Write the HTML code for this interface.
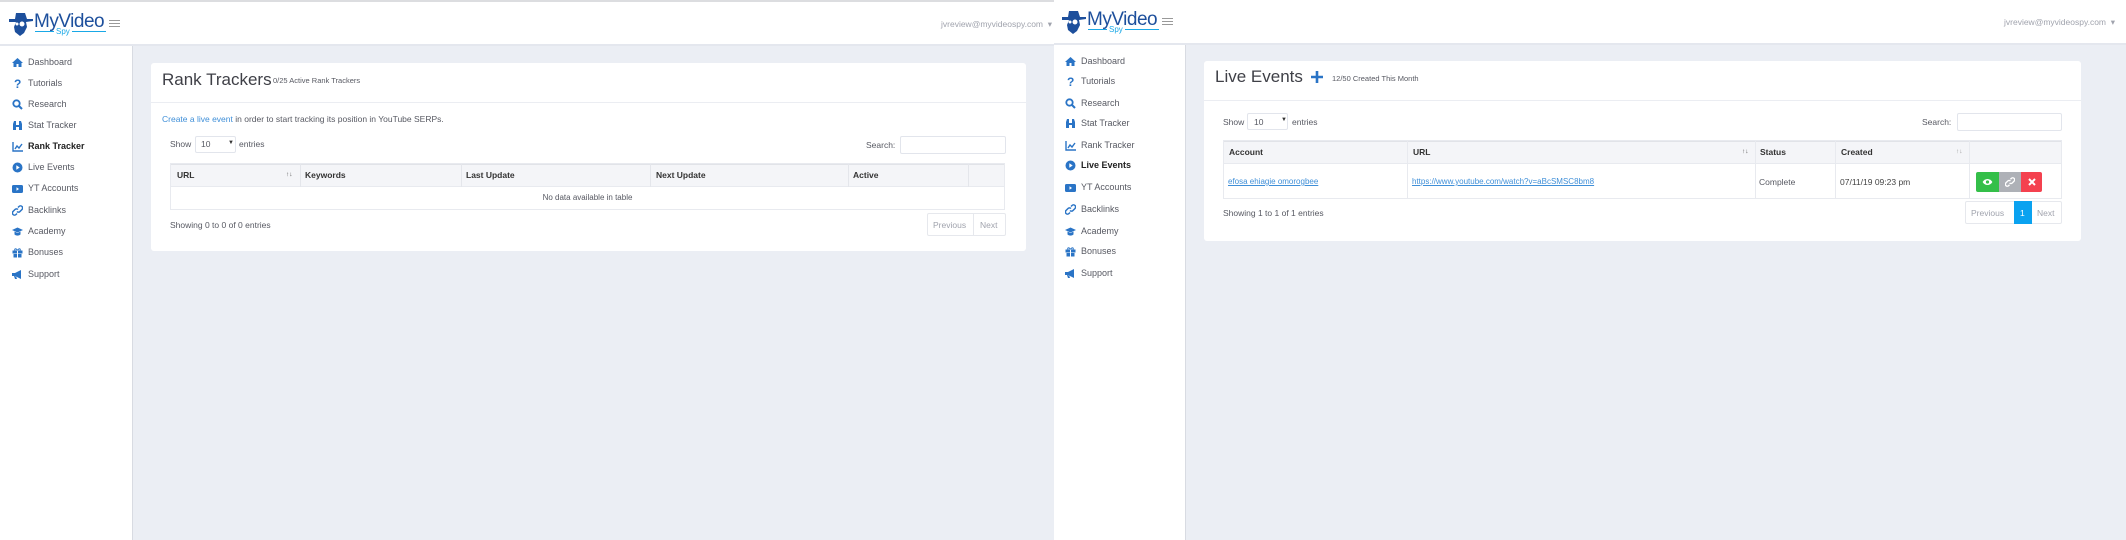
<!DOCTYPE html>
<html><head><meta charset="utf-8"><style>
*{margin:0;padding:0;box-sizing:border-box}
body{width:2126px;height:540px;overflow:hidden;font-family:"Liberation Sans",Arial,sans-serif;background:#ebeef4;position:relative;color:#575962}
.a{position:absolute}
.hdr{background:#fff;border-bottom:2px solid #e4e7ee}
.side{background:#fff;border-right:1px solid #d8dbe2}
.nav{position:absolute;font-size:9px;line-height:1;color:#575962;white-space:nowrap}
.nav svg{position:absolute;left:-16px;top:-1px}
.card{background:#fff;border-radius:3px}
.t{position:absolute;white-space:nowrap;line-height:1}
.th{position:absolute;font-size:8.5px;line-height:1;font-weight:bold;color:#333;white-space:nowrap}
.lnk{color:#3f8fd8}
.inp{position:absolute;background:#fff;border:1px solid #e2e5ec;border-radius:2px}
</style></head><body>

<!-- LEFT PANEL -->
<div class="a" style="left:0;top:0;width:1054px;height:2px;background:#dcdde0"></div>
<div class="a hdr" style="left:0;top:2px;width:1054px;height:44px"></div>
<div class="a side" style="left:0;top:46px;width:133px;height:494px"></div>

<svg class="a" style="left:8px;top:12px" width="26" height="25" viewBox="0 0 26 25"><path d="M8 1h9l2 6h6v2l-7 1 1 5-3 6-4 3-5-4-1-5 2-5H1V7h6z" fill="#1d4f9c"/><circle cx="14" cy="12" r="2.5" fill="#fff"/><circle cx="9" cy="12" r="1.5" fill="#fff"/></svg>
<div class="t" style="left:34px;top:12px;font-size:19px;color:#1d4f9c;letter-spacing:-0.5px">MyVideo</div>
<div class="t" style="left:56px;top:28px;font-size:8px;color:#19a8e6">Spy</div>
<div class="a" style="left:35px;top:31px;width:19px;height:1px;background:#19a8e6"></div>
<div class="a" style="left:72px;top:31px;width:34px;height:1px;background:#19a8e6"></div>
<div class="a" style="left:109px;top:20px;width:11px;height:1.3px;background:#999;box-shadow:0 3px 0 #999,0 6px 0 #999"></div>
<div class="t" style="left:400px;top:20px;width:652px;text-align:right;font-size:8.5px;color:#a0a3ad">jvreview@myvideospy.com &nbsp;▾</div>

<div class="nav" style="left:28px;top:58px"><svg width="11" height="11" viewBox="0 0 11 11"><path d="M5.5 1L0 6h1.5v4h3V7h2v3h3V6H11z" fill="#2a74c6"/></svg>Dashboard</div>
<div class="nav" style="left:28px;top:79px"><svg width="11" height="11" viewBox="0 0 11 11"><text x="2" y="10" font-size="12" font-weight="bold" fill="#2a74c6" font-family="Liberation Sans">?</text></svg>Tutorials</div>
<div class="nav" style="left:28px;top:100px"><svg width="11" height="11" viewBox="0 0 11 11"><circle cx="4.5" cy="4.5" r="3.2" stroke="#2a74c6" stroke-width="1.8" fill="none"/><path d="M7 7l3 3" stroke="#2a74c6" stroke-width="2"/></svg>Research</div>
<div class="nav" style="left:28px;top:121px"><svg width="11" height="11" viewBox="0 0 11 11"><path d="M1 10V4l1-3h2v9zM7 10V1h2l1 3v6z M4 5h3v2H4z" fill="#2a74c6"/></svg>Stat Tracker</div>
<div class="nav" style="left:28px;top:142px;font-weight:bold;color:#222"><svg width="11" height="11" viewBox="0 0 11 11"><path d="M1 1v9h10" stroke="#2a74c6" stroke-width="1.4" fill="none"/><path d="M3 8l2-3 2 2 3-4" stroke="#2a74c6" stroke-width="1.4" fill="none"/></svg>Rank Tracker</div>
<div class="nav" style="left:28px;top:163px"><svg width="11" height="11" viewBox="0 0 11 11"><circle cx="5.5" cy="5.5" r="5" fill="#2a74c6"/><path d="M4.3 3.3v4.4L7.7 5.5z" fill="#fff"/></svg>Live Events</div>
<div class="nav" style="left:28px;top:184px"><svg width="11" height="11" viewBox="0 0 11 11"><rect x="0" y="2" width="11" height="8" rx="1.5" fill="#2a74c6"/><path d="M4.5 4.3v3.4L7 6z" fill="#fff"/></svg>YT Accounts</div>
<div class="nav" style="left:28px;top:206px"><svg width="11" height="11" viewBox="0 0 11 11"><path d="M6 2.5l1-1a2 2 0 013 3l-2 2a2 2 0 01-3 0M5 8.5l-1 1a2 2 0 01-3-3l2-2a2 2 0 013 0" stroke="#2a74c6" stroke-width="1.5" fill="none"/></svg>Backlinks</div>
<div class="nav" style="left:28px;top:227px"><svg width="11" height="11" viewBox="0 0 11 11"><path d="M0 4l5.5-2.5L11 4 5.5 6.5z" fill="#2a74c6"/><path d="M2.5 5.5v3c2 1.5 4 1.5 6 0v-3l-3 1.5z" fill="#2a74c6"/></svg>Academy</div>
<div class="nav" style="left:28px;top:248px"><svg width="11" height="11" viewBox="0 0 11 11"><rect x="0.5" y="3.5" width="10" height="3" fill="#2a74c6"/><rect x="1.5" y="7" width="8" height="3.5" fill="#2a74c6"/><path d="M5.5 3.5C4 1 2 1.5 3 3.5M5.5 3.5C7 1 9 1.5 8 3.5" stroke="#2a74c6" fill="none"/><path d="M5 3.5v7h1v-7z" fill="#fff"/></svg>Bonuses</div>
<div class="nav" style="left:28px;top:270px"><svg width="11" height="11" viewBox="0 0 11 11"><path d="M0 4h3l6-3v9L3 7H0z M2 7l1 3h2L4 7z" fill="#2a74c6"/></svg>Support</div>

<div class="a card" style="left:151px;top:63px;width:875px;height:188px"></div>
<div class="a" style="left:151px;top:102px;width:875px;height:1px;background:#ebedf2"></div>
<div class="t" style="left:162px;top:71px;font-size:17px;color:#3f4047">Rank Trackers</div>
<div class="t" style="left:273px;top:77px;font-size:7.5px;color:#575962">0/25 Active Rank Trackers</div>
<div class="t" style="left:162px;top:115px;font-size:8.5px;color:#575962"><span class="lnk">Create a live event</span> in order to start tracking its position in YouTube SERPs.</div>
<div class="t" style="left:170px;top:140px;font-size:8.5px">Show</div>
<div class="inp" style="left:195px;top:136px;width:41px;height:17px"></div>
<div class="t" style="left:201px;top:140px;font-size:8.5px">10</div>
<div class="t" style="left:228px;top:140px;font-size:6px;color:#333">▼</div>
<div class="t" style="left:239px;top:140px;font-size:8.5px">entries</div>
<div class="t" style="left:866px;top:141px;font-size:8.5px">Search:</div>
<div class="inp" style="left:900px;top:136px;width:106px;height:18px"></div>

<div class="a" style="left:170px;top:163px;width:835px;height:47px;border:1px solid #e8eaef;background:#fff"></div>
<div class="a" style="left:171px;top:164px;width:833px;height:23px;background:#f4f5f8;border-bottom:1px solid #e8eaef;border-top:1px solid #e1e3e8"></div>
<div class="a" style="left:300px;top:164px;width:1px;height:23px;background:#e4e6eb"></div>
<div class="a" style="left:461px;top:164px;width:1px;height:23px;background:#e4e6eb"></div>
<div class="a" style="left:650px;top:164px;width:1px;height:23px;background:#e4e6eb"></div>
<div class="a" style="left:848px;top:164px;width:1px;height:23px;background:#e4e6eb"></div>
<div class="a" style="left:968px;top:164px;width:1px;height:23px;background:#e4e6eb"></div>
<div class="th" style="left:177px;top:171px">URL</div>
<div class="t" style="left:286px;top:172px;font-size:6.5px;color:#555">↑↓</div>
<div class="th" style="left:305px;top:171px">Keywords</div>
<div class="th" style="left:466px;top:171px">Last Update</div>
<div class="th" style="left:656px;top:171px">Next Update</div>
<div class="th" style="left:853px;top:171px">Active</div>
<div class="t" style="left:170px;top:194px;width:835px;text-align:center;font-size:8px;color:#575962">No data available in table</div>
<div class="t" style="left:170px;top:221px;font-size:8.5px">Showing 0 to 0 of 0 entries</div>
<div class="a" style="left:927px;top:213px;width:79px;height:23px;border:1px solid #e6e8ed;border-radius:2px"></div>
<div class="a" style="left:973px;top:214px;width:1px;height:21px;background:#e6e8ed"></div>
<div class="t" style="left:933px;top:221px;font-size:8.5px;color:#a0a3ad">Previous</div>
<div class="t" style="left:980px;top:221px;font-size:8.5px;color:#a0a3ad">Next</div>

<!-- RIGHT PANEL -->
<div class="a hdr" style="left:1054px;top:0;width:1072px;height:45px"></div>
<div class="a side" style="left:1054px;top:45px;width:132px;height:495px"></div>

<svg class="a" style="left:1061px;top:10px" width="26" height="25" viewBox="0 0 26 25"><path d="M8 1h9l2 6h6v2l-7 1 1 5-3 6-4 3-5-4-1-5 2-5H1V7h6z" fill="#1d4f9c"/><circle cx="14" cy="12" r="2.5" fill="#fff"/><circle cx="9" cy="12" r="1.5" fill="#fff"/></svg>
<div class="t" style="left:1087px;top:10px;font-size:19px;color:#1d4f9c;letter-spacing:-0.5px">MyVideo</div>
<div class="t" style="left:1109px;top:26px;font-size:8px;color:#19a8e6">Spy</div>
<div class="a" style="left:1088px;top:29px;width:19px;height:1px;background:#19a8e6"></div>
<div class="a" style="left:1125px;top:29px;width:34px;height:1px;background:#19a8e6"></div>
<div class="a" style="left:1162px;top:18px;width:11px;height:1.3px;background:#999;box-shadow:0 3px 0 #999,0 6px 0 #999"></div>
<div class="t" style="left:1600px;top:18px;width:515px;text-align:right;font-size:8.5px;color:#a0a3ad">jvreview@myvideospy.com &nbsp;▾</div>

<div class="nav" style="left:1081px;top:57px"><svg width="11" height="11" viewBox="0 0 11 11"><path d="M5.5 1L0 6h1.5v4h3V7h2v3h3V6H11z" fill="#2a74c6"/></svg>Dashboard</div>
<div class="nav" style="left:1081px;top:77px"><svg width="11" height="11" viewBox="0 0 11 11"><text x="2" y="10" font-size="12" font-weight="bold" fill="#2a74c6" font-family="Liberation Sans">?</text></svg>Tutorials</div>
<div class="nav" style="left:1081px;top:99px"><svg width="11" height="11" viewBox="0 0 11 11"><circle cx="4.5" cy="4.5" r="3.2" stroke="#2a74c6" stroke-width="1.8" fill="none"/><path d="M7 7l3 3" stroke="#2a74c6" stroke-width="2"/></svg>Research</div>
<div class="nav" style="left:1081px;top:119px"><svg width="11" height="11" viewBox="0 0 11 11"><path d="M1 10V4l1-3h2v9zM7 10V1h2l1 3v6z M4 5h3v2H4z" fill="#2a74c6"/></svg>Stat Tracker</div>
<div class="nav" style="left:1081px;top:141px"><svg width="11" height="11" viewBox="0 0 11 11"><path d="M1 1v9h10" stroke="#2a74c6" stroke-width="1.4" fill="none"/><path d="M3 8l2-3 2 2 3-4" stroke="#2a74c6" stroke-width="1.4" fill="none"/></svg>Rank Tracker</div>
<div class="nav" style="left:1081px;top:161px;font-weight:bold;color:#222"><svg width="11" height="11" viewBox="0 0 11 11"><circle cx="5.5" cy="5.5" r="5" fill="#2a74c6"/><path d="M4.3 3.3v4.4L7.7 5.5z" fill="#fff"/></svg>Live Events</div>
<div class="nav" style="left:1081px;top:183px"><svg width="11" height="11" viewBox="0 0 11 11"><rect x="0" y="2" width="11" height="8" rx="1.5" fill="#2a74c6"/><path d="M4.5 4.3v3.4L7 6z" fill="#fff"/></svg>YT Accounts</div>
<div class="nav" style="left:1081px;top:205px"><svg width="11" height="11" viewBox="0 0 11 11"><path d="M6 2.5l1-1a2 2 0 013 3l-2 2a2 2 0 01-3 0M5 8.5l-1 1a2 2 0 01-3-3l2-2a2 2 0 013 0" stroke="#2a74c6" stroke-width="1.5" fill="none"/></svg>Backlinks</div>
<div class="nav" style="left:1081px;top:227px"><svg width="11" height="11" viewBox="0 0 11 11"><path d="M0 4l5.5-2.5L11 4 5.5 6.5z" fill="#2a74c6"/><path d="M2.5 5.5v3c2 1.5 4 1.5 6 0v-3l-3 1.5z" fill="#2a74c6"/></svg>Academy</div>
<div class="nav" style="left:1081px;top:247px"><svg width="11" height="11" viewBox="0 0 11 11"><rect x="0.5" y="3.5" width="10" height="3" fill="#2a74c6"/><rect x="1.5" y="7" width="8" height="3.5" fill="#2a74c6"/><path d="M5.5 3.5C4 1 2 1.5 3 3.5M5.5 3.5C7 1 9 1.5 8 3.5" stroke="#2a74c6" fill="none"/><path d="M5 3.5v7h1v-7z" fill="#fff"/></svg>Bonuses</div>
<div class="nav" style="left:1081px;top:269px"><svg width="11" height="11" viewBox="0 0 11 11"><path d="M0 4h3l6-3v9L3 7H0z M2 7l1 3h2L4 7z" fill="#2a74c6"/></svg>Support</div>

<div class="a card" style="left:1204px;top:61px;width:877px;height:180px"></div>
<div class="a" style="left:1204px;top:100px;width:877px;height:1px;background:#ebedf2"></div>
<div class="t" style="left:1215px;top:68px;font-size:17px;color:#3f4047">Live Events</div>
<svg class="a" style="left:1311px;top:71px" width="12" height="12" viewBox="0 0 12 12"><path d="M6 0v12M0 6h12" stroke="#2a74c6" stroke-width="2.6"/></svg>
<div class="t" style="left:1332px;top:75px;font-size:7.5px;color:#575962">12/50 Created This Month</div>
<div class="t" style="left:1223px;top:118px;font-size:8.5px">Show</div>
<div class="inp" style="left:1247px;top:113px;width:41px;height:17px"></div>
<div class="t" style="left:1254px;top:118px;font-size:8.5px">10</div>
<div class="t" style="left:1281px;top:117px;font-size:6px;color:#333">▼</div>
<div class="t" style="left:1292px;top:118px;font-size:8.5px">entries</div>
<div class="t" style="left:1922px;top:118px;font-size:8.5px">Search:</div>
<div class="inp" style="left:1957px;top:113px;width:105px;height:18px"></div>

<div class="a" style="left:1223px;top:140px;width:839px;height:59px;border:1px solid #e8eaef;background:#fff"></div>
<div class="a" style="left:1224px;top:141px;width:837px;height:23px;background:#f4f5f8;border-bottom:1px solid #e8eaef;border-top:1px solid #e1e3e8"></div>
<div class="a" style="left:1407px;top:141px;width:1px;height:57px;background:#e8eaef"></div>
<div class="a" style="left:1755px;top:141px;width:1px;height:57px;background:#e8eaef"></div>
<div class="a" style="left:1835px;top:141px;width:1px;height:57px;background:#e8eaef"></div>
<div class="a" style="left:1969px;top:141px;width:1px;height:57px;background:#e8eaef"></div>
<div class="th" style="left:1229px;top:148px">Account</div>
<div class="th" style="left:1413px;top:148px">URL</div>
<div class="t" style="left:1742px;top:149px;font-size:6.5px;color:#555">↑↓</div>
<div class="th" style="left:1760px;top:148px">Status</div>
<div class="th" style="left:1841px;top:148px">Created</div>
<div class="t" style="left:1956px;top:149px;font-size:6.5px;color:#999">↑↓</div>
<div class="t lnk" style="left:1228px;top:178px;font-size:8px;text-decoration:underline">efosa ehiagie omorogbee</div>
<div class="t lnk" style="left:1412px;top:178px;font-size:8px;text-decoration:underline">https://www.youtube.com/watch?v=aBcSMSC8bm8</div>
<div class="t" style="left:1759px;top:178px;font-size:8.5px">Complete</div>
<div class="t" style="left:1840px;top:178px;font-size:8.5px;color:#444">07/11/19 09:23 pm</div>
<div class="a" style="left:1976px;top:172px;width:23px;height:20px;background:#34bf49;border-radius:2px 0 0 2px"></div>
<div class="a" style="left:1999px;top:172px;width:22px;height:20px;background:#aeb1b7"></div>
<div class="a" style="left:2021px;top:172px;width:21px;height:20px;background:#f4414f;border-radius:0 2px 2px 0"></div>
<svg class="a" style="left:1982px;top:178px" width="11" height="8" viewBox="0 0 12 9"><path d="M0.5 4.5C3 0 9 0 11.5 4.5 9 9 3 9 0.5 4.5z" fill="#fff"/><circle cx="6" cy="4.5" r="1.8" fill="#34bf49"/></svg>
<svg class="a" style="left:2005px;top:177px" width="10" height="10" viewBox="0 0 11 11"><path d="M6 2.5l1-1a2 2 0 013 3l-2 2a2 2 0 01-3 0M5 8.5l-1 1a2 2 0 01-3-3l2-2a2 2 0 013 0" stroke="#fff" stroke-width="1.5" fill="none"/></svg>
<svg class="a" style="left:2028px;top:178px" width="8" height="8" viewBox="0 0 8 8"><path d="M1 1l6 6M7 1L1 7" stroke="#fff" stroke-width="2"/></svg>
<div class="t" style="left:1223px;top:209px;font-size:8.5px">Showing 1 to 1 of 1 entries</div>
<div class="a" style="left:1965px;top:201px;width:97px;height:23px;border:1px solid #e6e8ed;border-radius:2px"></div>
<div class="a" style="left:2014px;top:201px;width:18px;height:23px;background:#0aa2f0"></div>
<div class="t" style="left:1971px;top:209px;font-size:8.5px;color:#a0a3ad">Previous</div>
<div class="t" style="left:2020px;top:209px;font-size:8.5px;color:#fff">1</div>
<div class="t" style="left:2037px;top:209px;font-size:8.5px;color:#a0a3ad">Next</div>

</body></html>
